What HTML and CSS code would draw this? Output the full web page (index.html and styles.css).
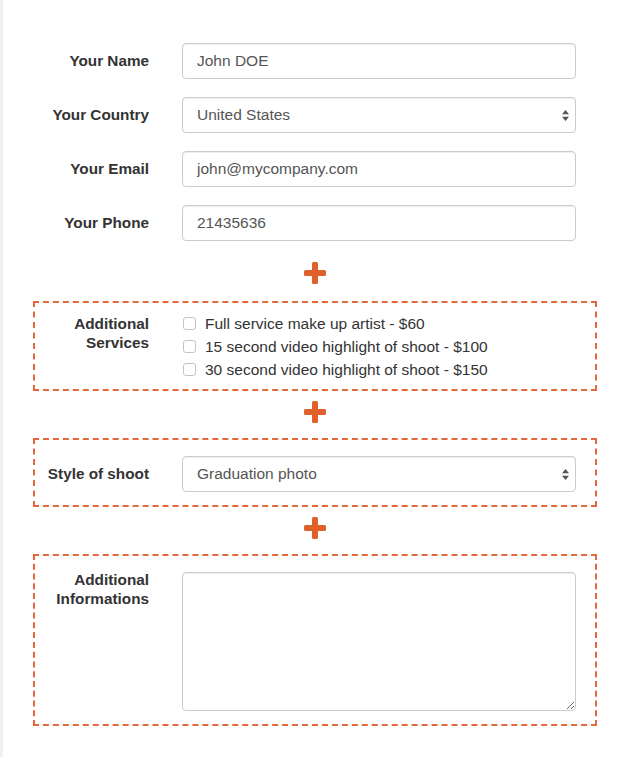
FILE: index.html
```html
<!DOCTYPE html>
<html>
<head>
<meta charset="utf-8">
<link rel="stylesheet" href="styles.css">
</head>
<body>
<div class="page">
  <form class="form">
    <section class="group plain">
      <div class="row"><label class="lbl">Your Name</label><input class="ctl" type="text" value="John DOE"></div>
      <div class="row"><label class="lbl">Your Country</label>
        <div class="ctl select"><span>United States</span>
          <svg class="arrows" width="7" height="11" viewBox="0 0 7 11"><path d="M3.5 0 L7 4.3 L0 4.3 Z M0 6.7 L7 6.7 L3.5 11 Z" fill="#555"/></svg>
        </div>
      </div>
      <div class="row"><label class="lbl">Your Email</label><input class="ctl" type="text" value="john@mycompany.com"></div>
      <div class="row"><label class="lbl">Your Phone</label><input class="ctl" type="text" value="21435636"></div>
    </section>

    <div class="plus first"><svg width="22" height="22" viewBox="0 0 22 22"><rect x="8" y="0" width="6" height="22" rx="1.5" fill="#e0602c"/><rect x="0" y="8" width="22" height="6" rx="1.5" fill="#e0602c"/></svg></div>

    <section class="group boxed checks">
      <div class="row top">
        <div class="lbl multi">Additional<br>Services</div>
        <div class="checklist">
          <div class="check"><span class="box"></span><span>Full service make up artist - $60</span></div>
          <div class="check"><span class="box"></span><span>15 second video highlight of shoot - $100</span></div>
          <div class="check"><span class="box"></span><span>30 second video highlight of shoot - $150</span></div>
        </div>
      </div>
    </section>

    <div class="plus"><svg width="22" height="22" viewBox="0 0 22 22"><rect x="8" y="0" width="6" height="22" rx="1.5" fill="#e0602c"/><rect x="0" y="8" width="22" height="6" rx="1.5" fill="#e0602c"/></svg></div>

    <section class="group boxed padded">
      <div class="row"><label class="lbl">Style of shoot</label>
        <div class="ctl select"><span>Graduation photo</span>
          <svg class="arrows" width="7" height="11" viewBox="0 0 7 11"><path d="M3.5 0 L7 4.3 L0 4.3 Z M0 6.7 L7 6.7 L3.5 11 Z" fill="#555"/></svg>
        </div>
      </div>
    </section>

    <div class="plus"><svg width="22" height="22" viewBox="0 0 22 22"><rect x="8" y="0" width="6" height="22" rx="1.5" fill="#e0602c"/><rect x="0" y="8" width="22" height="6" rx="1.5" fill="#e0602c"/></svg></div>

    <section class="group boxed padded">
      <div class="row top">
        <label class="lbl multi info">Additional<br>Informations</label>
        <textarea class="ctl area"></textarea>
      </div>
    </section>
  </form>
</div>
</body>
</html>
```
FILE: styles.css
```css
html, body {
  margin: 0;
  padding: 0;
  background: #fff;
}
body {
  font-family: "Liberation Sans", Arial, Helvetica, sans-serif;
  font-size: 15.5px;
  color: #333;
}
.page {
  border-left: 3px solid #f0f0f0;
  min-height: 757px;
  box-sizing: border-box;
  padding: 41px 0 0 30px;
}
.form {
  width: 564px;
  margin: 0;
}
.group {
  border: 2px dashed transparent;
  padding: 0 19px 0 0;
}
.boxed {
  border-color: #e4683c;
}
.plain {
  display: flex;
  flex-direction: column;
  gap: 18px;
}
.row {
  display: grid;
  grid-template-columns: 114px 1fr;
  column-gap: 33px;
  align-items: center;
}
.row.top {
  align-items: start;
}
.lbl {
  text-align: right;
  font-weight: bold;
  font-size: 15.3px;
  color: #333;
  line-height: 20px;
  white-space: nowrap;
}
.lbl.multi {
  line-height: 19px;
  padding-top: 2px;
}
.lbl.info {
  padding-top: 0;
  margin-top: -2px;
}
.ctl {
  box-sizing: border-box;
  height: 36px;
  width: 100%;
  margin: 0;
  border: 1px solid #ccc;
  border-radius: 4px;
  box-shadow: inset 0 1px 1px rgba(0,0,0,.075);
  padding: 0 12px 0 14px;
  font-family: inherit;
  font-size: 15.5px;
  color: #555;
  background: #fff;
  outline: none;
}
.select {
  display: flex;
  align-items: center;
  justify-content: space-between;
  padding-right: 6px;
}
.arrows {
  display: block;
}
.plus {
  display: flex;
  justify-content: center;
  margin: 10px 0 15px;
}
.plus svg {
  display: block;
}
.plus.first {
  margin-top: 19px;
  margin-bottom: 17px;
}
.checks {
  padding-top: 9px;
  padding-bottom: 8px;
}
.padded {
  padding-top: 16px;
  padding-bottom: 13px;
}
.checklist {
  display: flex;
  flex-direction: column;
  line-height: 23px;
  color: #333;
}
.check {
  display: flex;
  align-items: center;
  gap: 9px;
}
.check .box {
  box-sizing: border-box;
  width: 13px;
  height: 13px;
  border: 1px solid #c4c4c4;
  border-radius: 3px;
  background: #fff;
  flex: none;
  margin-left: 1px;
}
.area {
  height: 139px;
  resize: vertical;
  padding: 6px 12px;
  display: block;
}
```
